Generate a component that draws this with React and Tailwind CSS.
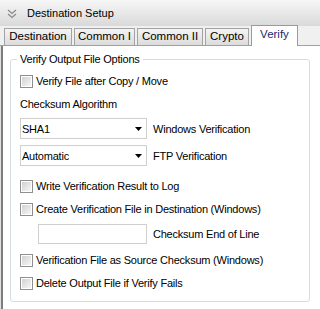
import React from "react";

const font = { fontFamily: '"Liberation Sans", Tahoma, Arial, sans-serif' };

function Check({ label, className = "" }) {
  return (
    <div className={"flex h-[14px] items-center " + className}>
      <div className="box-border h-[13px] w-[13px] border border-[#8e8f8f] bg-white p-px">
        <div className="h-full w-full bg-gradient-to-br from-[#d2d2d2] to-[#f6f6f6]" />
      </div>
      <span className="ml-[3px] text-[11px] leading-[14px] tracking-[-0.22px] text-black">{label}</span>
    </div>
  );
}

function Select({ value, label, className = "" }) {
  return (
    <div className={"flex items-center " + className}>
      <div className="box-border flex h-[21px] w-[127px] items-center justify-between border border-[#cfcfcf] bg-white pl-[1px] pr-[3px]">
        <span className="text-[11px] leading-[14px] tracking-[-0.22px] text-black">{value}</span>
        <svg width="7" height="4" viewBox="0 0 7 4" className="mr-[1px]">
          <path d="M0 0H7L3.5 4Z" fill="#000" />
        </svg>
      </div>
      <span className="ml-[6px] text-[11px] leading-[14px] tracking-[-0.22px] text-black">{label}</span>
    </div>
  );
}

function Tab({ label, w, active }) {
  if (active) {
    return (
      <div
        className={
          "relative z-10 box-border flex h-[21px] items-center justify-center border border-b-0 border-[#9a9a9a] bg-white text-[11.5px] text-[#1b2a6b] " +
          w
        }
      >
        <span className="-mt-[3px]">{label}</span>
      </div>
    );
  }
  return (
    <div
      className={
        "box-border flex h-[17px] items-center justify-center border border-b-0 border-[#a3a3a3] bg-gradient-to-b from-[#f4f4f4] to-[#dcdcdc] text-[11.5px] text-black " +
        w
      }
    >
      {label}
    </div>
  );
}

export default function App() {
  return (
    <div className="flex h-[309px] w-[320px] flex-col overflow-hidden bg-[#f0f0f0]" style={font}>
      {/* Header */}
      <div className="flex h-[26px] items-center bg-gradient-to-b from-[#f7f7f7] to-[#d9d9d9]">
        <svg width="10" height="10" viewBox="0 0 10 10" className="ml-[7px] mt-[1px]">
          <path d="M1 1L5 4.5L9 1M1 5L5 8.5L9 5" fill="none" stroke="#8a8a8a" strokeWidth="1.2" />
        </svg>
        <span className="ml-[10px] mt-[1px] text-[11px] text-black">Destination Setup</span>
      </div>
      {/* Tabs */}
      <div className="flex h-[20px] items-end gap-[2px] border-b border-[#a0a0a0] pl-[4px]">
        <Tab label="Destination" w="w-[68px]" />
        <Tab label="Common I" w="w-[61px]" />
        <Tab label="Common II" w="w-[66px]" />
        <Tab label="Crypto" w="w-[44px]" />
        <div className="-mb-px">
          <Tab label="Verify" w="w-[47px]" active />
        </div>
      </div>
      {/* Panel */}
      <div className="flex flex-1">
        <div className="w-[1px] bg-[#e0e0e0]" />
        <div className="w-[2px] bg-[#7d7d7d]" />
        <div className="flex-1 bg-white pl-[7px] pr-[10px] pt-[13px]">
          <div className="relative box-border h-[243px] rounded-[3px] border border-[#d3dde3] pl-[9px]">
            <span className="absolute -top-[8px] left-[6px] bg-white px-[3px] text-[11px] leading-[14px] tracking-[-0.22px] text-black">
              Verify Output File Options
            </span>
            <Check label="Verify File after Copy / Move" className="mt-[14px]" />
            <div className="mt-[9px] h-[14px] text-[11px] leading-[14px] tracking-[-0.22px] text-black">Checksum Algorithm</div>
            <Select value="SHA1" label="Windows Verification" className="mt-[7px]" />
            <Select value="Automatic" label="FTP Verification" className="mt-[6px]" />
            <Check label="Write Verification Result to Log" className="mt-[13px]" />
            <Check label="Create Verification File in Destination (Windows)" className="mt-[9px]" />
            <div className="mt-[8px] flex items-center pl-[18px]">
              <div className="box-border h-[20px] w-[109px] border border-[#cfcfcf] bg-white" />
              <span className="ml-[6px] text-[11px] leading-[14px] tracking-[-0.22px] text-black">Checksum End of Line</span>
            </div>
            <Check label="Verification File as Source Checksum (Windows)" className="mt-[9px]" />
            <Check label="Delete Output File if Verify Fails" className="mt-[9px]" />
          </div>
        </div>
      </div>
    </div>
  );
}
